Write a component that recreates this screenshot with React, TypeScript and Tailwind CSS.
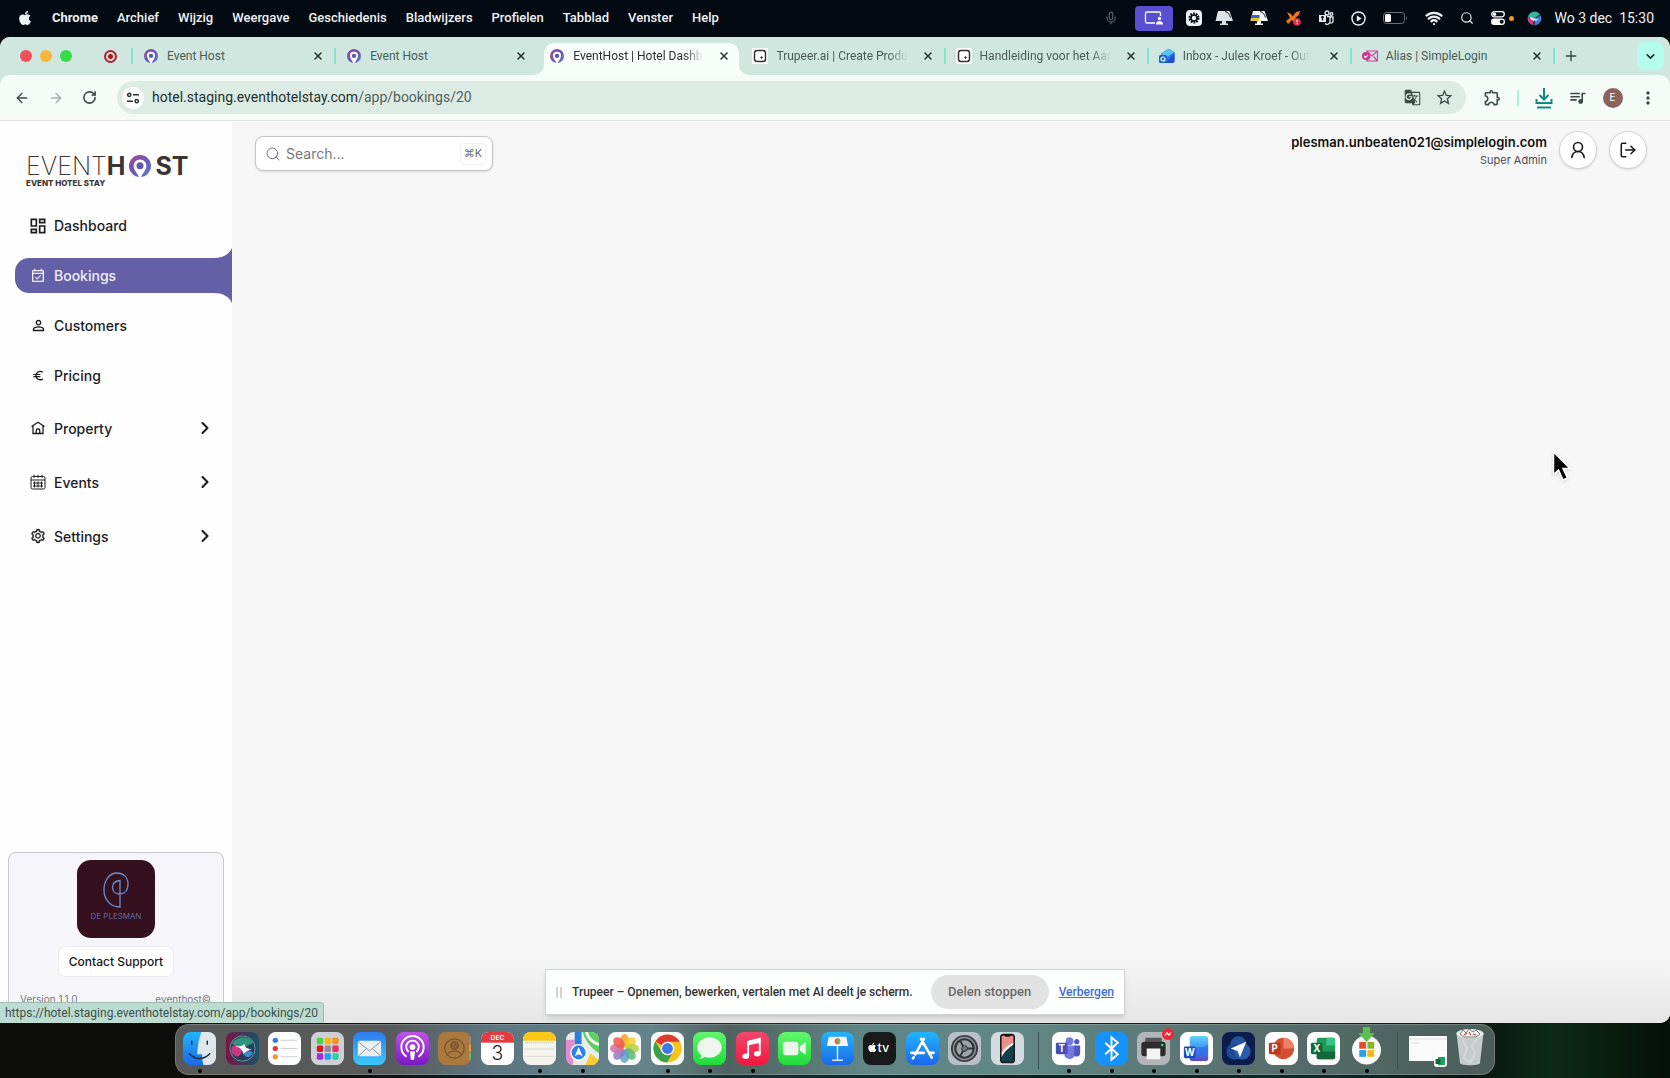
import { ReactNode } from 'react'
import { ArrowLeft, ArrowRight, ChevronDown, ChevronRight, LogOut, Mic, Plus, RotateCw, Search, Wifi, X } from 'lucide-react'
import { FaApple } from 'react-icons/fa'
import { AiOutlineSetting } from 'react-icons/ai'
import {
  MdEuro,
  MdGTranslate,
  MdMoreVert,
  MdOutlineDashboard,
  MdOutlineEventAvailable,
  MdOutlineExtension,
  MdPersonOutline,
  MdQueueMusic,
  MdStarOutline,
} from 'react-icons/md'

interface TabData {
  title: string
  icon: ReactNode
  active?: boolean
  divider?: boolean
  faded?: boolean
}

interface NavItem {
  label: string
  icon: ReactNode
}

interface DockItem {
  name: string
  art: ReactNode
  running?: boolean
}

function EventHostPin({ className }: { className?: string }) {
  return (
    <svg viewBox="0 0 22 22" className={className} aria-hidden="true">
      <defs>
        <linearGradient id="pin" x1="0" y1="0" x2="1" y2="1">
          <stop offset="0" stopColor="#a0469a" />
          <stop offset="0.55" stopColor="#6a5bb5" />
          <stop offset="1" stopColor="#5b7fd0" />
        </linearGradient>
      </defs>
      <circle cx="11" cy="11" r="11" fill="url(#pin)" />
      <path d="M10 22C9 19 4.600 15.500 4.600 10.800a6.400 6.400 0 0 1 12.800 0c0 4.700-4.400 8.200-5.400 11.200z" fill="#fff" />
      <circle cx="11" cy="10.800" r="3.500" fill="#5b5aa8" />
    </svg>
  )
}

function TrupeerIcon() {
  return (
    <svg viewBox="0 0 16 16" className="size-4" aria-hidden="true">
      <rect width="16" height="16" fill="#fff" />
      <rect x="2.500" y="2.500" width="11" height="11" rx="2.500" fill="none" stroke="#3a2c33" strokeWidth="1.500" />
      <path d="M9.500 7.500l.6 1.400 1.400.6-1.400.6-.6 1.400-.6-1.400-1.400-.6 1.400-.6z" fill="#3a2c33" />
    </svg>
  )
}

function OutlookIcon() {
  return (
    <svg viewBox="0 0 16 16" className="size-4" aria-hidden="true">
      <path d="M2 5.500L9.500.800 15.500 4v9a2 2 0 0 1-2 2H4z" fill="#2a78e4" />
      <path d="M2 5.500L9.500.800 15.500 4 8 9z" fill="#58c1f5" />
      <path d="M15.500 5v8a2 2 0 0 1-2 2H7z" fill="#1c4fd0" />
      <rect y="7" width="8" height="8" rx="1.500" fill="#1466c8" />
      <circle cx="4" cy="11" r="2" fill="none" stroke="#fff" strokeWidth="1.200" />
    </svg>
  )
}

function SimpleLoginIcon() {
  return (
    <svg viewBox="0 0 16 16" className="size-4" aria-hidden="true">
      <path d="M4 3h11.500v10H4M5 3.500l5 4.500 5-4.500M5 12.500l3.500-4M15 12.500l-3.500-4" fill="none" stroke="#d6409f" strokeWidth="1.200" />
      <circle cx="4" cy="8" r="4" fill="#d3308f" />
      <path d="M2.200 8l1.400 1.400 2.400-2.600" fill="none" stroke="#fff" strokeWidth="1.100" />
    </svg>
  )
}

const menus = ['Archief', 'Wijzig', 'Weergave', 'Geschiedenis', 'Bladwijzers', 'Profielen', 'Tabblad', 'Venster', 'Help']

const tabs: TabData[] = [
  { title: 'Event Host', icon: <EventHostPin className="size-[14px]" />, divider: true },
  { title: 'Event Host', icon: <EventHostPin className="size-[14px]" /> },
  { title: 'EventHost | Hotel Dashb', icon: <EventHostPin className="size-[14px]" />, active: true, faded: true },
  { title: 'Trupeer.ai | Create Produ', icon: <TrupeerIcon />, divider: true, faded: true },
  { title: 'Handleiding voor het Aar', icon: <TrupeerIcon />, divider: true, faded: true },
  { title: 'Inbox - Jules Kroef - Out', icon: <OutlookIcon />, divider: true, faded: true },
  { title: 'Alias | SimpleLogin', icon: <SimpleLoginIcon />, divider: true },
]

function SiriOrb({ className }: { className?: string }) {
  return (
    <svg viewBox="0 0 24 24" className={className} aria-hidden="true">
      <circle cx="12" cy="12" r="11" fill="#27304f" />
      <path d="M2 9a10.500 10.500 0 0 1 18-4l-8 7z" fill="#2fb79c" />
      <path d="M1.500 10A11 11 0 0 0 9 22l3-10z" fill="#d8356f" />
      <path d="M22 8a11 11 0 0 1-9 14.500L12 12z" fill="#3d7fd8" />
      <path d="M4 10c5-1 6 3 15 3-6 3-9 3-12 1z" fill="#fff" opacity="0.85" />
      <circle cx="12" cy="12" r="10.500" fill="none" stroke="#8ac" strokeOpacity="0.5" />
    </svg>
  )
}

function MenuBar() {
  return (
    <header className="flex h-[37px] shrink-0 items-center justify-between bg-[#030a12] pr-4 pl-[17px] pb-px font-['Roboto','Liberation_Sans',sans-serif] text-[13px] font-medium text-[#eef1f3]">
      <nav className="flex items-center gap-[19px]">
        <button aria-label="Apple">
          <FaApple className="size-4" />
        </button>
        <button className="font-bold">Chrome</button>
        {menus.map((menu) => (
          <button key={menu}>{menu}</button>
        ))}
      </nav>
      <div className="flex items-center gap-[17px]">
        <Mic className="size-[14px] text-[#5c6268]" />
        <div className="flex h-[25px] w-[38px] items-center justify-center rounded-[4px] bg-[#5a4ed0]">
          <svg viewBox="0 0 20 16" className="h-4 w-5" fill="none" stroke="#fff" strokeWidth="1.300">
            <path d="M11 13H3a1.500 1.500 0 0 1-1.500-1.500v-8A1.500 1.500 0 0 1 3 2h12a1.500 1.500 0 0 1 1.500 1.500V6" />
            <circle cx="15.500" cy="8.500" r="1.700" fill="#fff" stroke="none" />
            <path d="M12 14.500c0-2 1.500-3.500 3.500-3.500s3.500 1.500 3.500 3.500z" fill="#fff" stroke="none" />
          </svg>
        </div>
        <svg viewBox="0 0 16 16" className="-mx-1 size-4">
          <rect width="16" height="16" rx="4" fill="#eef1f3" />
          <circle cx="8" cy="8" r="4" fill="none" stroke="#0b1117" strokeWidth="3" strokeDasharray="1.600 0.900" />
          <circle cx="8" cy="8" r="3" fill="none" stroke="#0b1117" strokeWidth="1.500" />
        </svg>
        <svg viewBox="0 0 18 16" className="h-4 w-[18px]">
          <path d="M3 1h11.500L18 11H.500z" fill="#dfe3e6" />
          <path d="M10 1.500c3 .5 4.500 3 5.500 6" fill="none" stroke="#0b1117" />
          <path d="M7 11h4v2.500h2V15H5v-1.500h2z" fill="#dfe3e6" />
        </svg>
        <svg viewBox="0 0 18 16" className="h-4 w-[18px]">
          <path d="M3 1h11.500L18 11H.500z" fill="#f3f4f6" />
          <path d="M1.500 5h8v3H1z" fill="#3a62c9" />
          <path d="M1 8h8.500v3H.500z" fill="#e6c72f" />
          <path d="M10 1.500c3 .5 4.500 3 5.500 6" fill="none" stroke="#0b1117" />
          <path d="M7 11h4v2.500h2V15H5v-1.500h2z" fill="#f3f4f6" />
        </svg>
        <svg viewBox="0 0 16 16" className="size-4">
          <path d="M2 2l4 2 1.500 2.500L11 2l4-1-1 4-3.500 2.500L12 12l-2 2-3-4-4 4-2-3 4-3z" fill="#f0761e" />
          <circle cx="12" cy="12" r="3.800" fill="#e02d4b" />
          <path d="M12 9.800v2.600M12 13.200v1" stroke="#fff" />
        </svg>
        <svg viewBox="0 0 16 16" className="size-4" fill="none" stroke="#e8ebed" strokeWidth="1.300">
          <rect x="1" y="5" width="7" height="7" fill="#e8ebed" stroke="none" />
          <path d="M3 7h3M4.500 7v3.500" stroke="#030a12" />
          <circle cx="9" cy="3" r="2" />
          <circle cx="13.500" cy="4" r="1.300" />
          <path d="M9 6.500h3v5a3 3 0 0 1-5 2M12 7h3v4a2 2 0 0 1-3 1.800" />
        </svg>
        <svg viewBox="0 0 16 16" className="size-[15px]" fill="none" stroke="#eef1f3" strokeWidth="1.500">
          <circle cx="8" cy="8" r="7" />
          <path d="M6.200 4.800v6.400L11.300 8z" fill="#eef1f3" stroke="none" />
        </svg>
        <svg viewBox="0 0 25 12" className="h-3 w-[25px]">
          <rect x="0.500" y="0.500" width="21" height="11" rx="3" fill="none" stroke="#6c7378" />
          <rect x="2" y="2" width="6" height="8" rx="1.500" fill="#fff" />
          <path d="M23 4v4c1.300-.5 1.300-3.500 0-4z" fill="#6c7378" />
        </svg>
        <Wifi className="size-[18px]" strokeWidth={3} />
        <Search className="size-[14px]" />
        <div className="flex items-center gap-1">
          <svg viewBox="0 0 14 14" className="size-[14px]">
            <rect x="0.700" y="0.700" width="12.600" height="5.200" rx="2.600" fill="none" stroke="#fff" strokeWidth="1.300" />
            <circle cx="3.500" cy="3.300" r="1.700" fill="#fff" />
            <rect y="7.500" width="14" height="6.500" rx="3.200" fill="#fff" />
            <circle cx="10.700" cy="10.700" r="2" fill="#030a12" />
          </svg>
          <span className="size-[5px] rounded-full bg-[#f09a2c]" />
        </div>
        <SiriOrb className="-mx-1 size-[15px]" />
        <span className="text-[14px] font-normal whitespace-pre">Wo 3 dec  15:30</span>
      </div>
    </header>
  )
}

function Tab({ tab }: { tab: TabData }) {
  return (
    <div className="relative flex h-full min-w-0 flex-1 items-center">
      {tab.active && (
        <div className="absolute top-[6px] right-[3px] bottom-0 left-[5px] rounded-t-[10px] bg-[#f7fdf9]">
          <svg viewBox="0 0 10 10" className="absolute bottom-0 -left-[10px] size-[10px]">
            <path d="M10 0v10H0A10 10 0 0 0 10 0z" fill="#f7fdf9" />
          </svg>
          <svg viewBox="0 0 10 10" className="absolute -right-[10px] bottom-0 size-[10px]">
            <path d="M0 0v10h10A10 10 0 0 1 0 0z" fill="#f7fdf9" />
          </svg>
        </div>
      )}
      <div className="relative flex min-w-0 flex-1 items-center pr-[10px] pl-[10px]">
        <span className="flex w-4 shrink-0 justify-center">{tab.icon}</span>
        <button
          className={`ml-2 font-['Roboto','Liberation_Sans',sans-serif] text-[12px] whitespace-nowrap ${
            tab.active ? 'text-[#27312e]' : 'text-[#4a5b56]'
          } ${tab.faded ? '[mask-image:linear-gradient(to_right,black_85%,transparent)]' : ''}`}
        >
          {tab.title}
        </button>
        <button aria-label="Sluit tabblad" className="ml-auto shrink-0 text-[#27312e]">
          <X className="size-3" strokeWidth={3} />
        </button>
      </div>
      <span className={`h-4 w-[2px] ${tab.divider ? 'bg-[#7fe8ca]' : ''}`} />
    </div>
  )
}

function BrowserChrome() {
  return (
    <div className="shrink-0 bg-[#cfe7df]">
      <div className="flex h-[38px] items-center">
        <div className="flex w-[133px] shrink-0 items-center pl-5">
          <div className="flex gap-2">
            <span className="size-3 rounded-full bg-[#f2505a]" />
            <span className="size-3 rounded-full bg-[#f6b73c]" />
            <span className="size-3 rounded-full bg-[#35dd49]" />
          </div>
          <span className="ml-8 flex size-[13px] items-center justify-center rounded-full border-2 border-[#b3202e]">
            <span className="size-[7px] rounded-full border border-[#cfe7df] bg-[#b3101e]" />
          </span>
          <span className="ml-auto h-4 w-[2px] bg-[#7fe8ca]" />
        </div>
        <div className="flex h-full max-w-[1422px] flex-1">
          {tabs.map((tab, i) => (
            <Tab key={i} tab={tab} />
          ))}
        </div>
        <button aria-label="Nieuw tabblad" className="ml-2 text-[#33453f]">
          <Plus className="size-4" />
        </button>
        <button aria-label="Zoek tabbladen" className="mr-[6px] ml-auto flex h-7 w-[27px] items-center justify-center rounded-lg bg-[#b4fdea] text-[#123a30]">
          <ChevronDown className="size-[13px]" strokeWidth={3} />
        </button>
      </div>
      <div className="flex h-[46px] items-center rounded-t-[10px] border-b border-[#dfe5e2] bg-[#f5fcf8] pr-3 pl-[14px] text-[#3a4a45]">
        <div className="flex w-[103px] shrink-0 items-center gap-[18px]">
          <button aria-label="Terug">
            <ArrowLeft className="size-4" />
          </button>
          <button aria-label="Vooruit" className="text-[#a5b0ac]">
            <ArrowRight className="size-4" />
          </button>
          <button aria-label="Vernieuw">
            <RotateCw className="size-[15px]" strokeWidth={2.5} />
          </button>
        </div>
        <div className="flex h-[33px] flex-1 items-center rounded-full bg-[#dcece5] pr-3 pl-[5px]">
          <span className="flex size-[22px] shrink-0 items-center justify-center rounded-full bg-white">
            <svg viewBox="0 0 12 12" className="size-3" fill="none" stroke="#26322e" strokeWidth="1.500">
              <circle cx="2.300" cy="2.800" r="1.600" />
              <path d="M6 2.800h6M0 9.200h6" />
              <circle cx="9.700" cy="9.200" r="1.600" />
            </svg>
          </span>
          <a href="#" className="ml-2 flex-1 font-['Roboto','Liberation_Sans',sans-serif] text-[14px] text-[#24302c]">
            hotel.staging.eventhotelstay.com<span className="text-[#52615c]">/app/bookings/20</span>
          </a>
          <button aria-label="Vertaal" className="mr-[14px]">
            <MdGTranslate className="size-[17px]" />
          </button>
          <button aria-label="Bladwijzer">
            <MdStarOutline className="size-[19px]" />
          </button>
        </div>
        <div className="flex w-[192px] shrink-0 items-center justify-between pl-[17px]">
          <button aria-label="Extensies">
            <MdOutlineExtension className="size-[19px]" />
          </button>
          <span className="h-4 w-[2px] bg-[#a5f5df]" />
          <button aria-label="Downloads">
            <svg viewBox="0 0 18 22" className="h-[22px] w-[18px]" fill="none" stroke="#12897a" strokeWidth="2">
              <path d="M9 1v11M4.500 8L9 12.500 13.500 8M1.500 12v4h15v-4M2 20.500h14" />
            </svg>
          </button>
          <button aria-label="Media">
            <MdQueueMusic className="size-[19px]" />
          </button>
          <button className="flex size-5 items-center justify-center rounded-full bg-[#8a635c] text-[10px] text-white">E</button>
          <button aria-label="Menu">
            <MdMoreVert className="size-5" />
          </button>
        </div>
      </div>
    </div>
  )
}

const navItems: NavItem[] = [
  { label: 'Dashboard', icon: <MdOutlineDashboard className="size-5 shrink-0" /> },
  { label: 'Bookings', icon: <MdOutlineEventAvailable className="size-4 shrink-0" /> },
  { label: 'Customers', icon: <MdPersonOutline className="size-[17px] shrink-0" /> },
  { label: 'Pricing', icon: <MdEuro className="size-[13px] shrink-0" /> },
]

const navGroups: NavItem[] = [
  {
    label: 'Property',
    icon: (
      <svg viewBox="0 0 14 14" className="size-[14px]" fill="none" stroke="currentColor" strokeWidth="1.300">
        <path d="M.500 5.500L7 1.200l6.500 4.300M2 5v7.500h10V5M5.200 12.500V9.800a1.800 1.800 0 0 1 3.600 0v2.700" />
      </svg>
    ),
  },
  {
    label: 'Events',
    icon: (
      <svg viewBox="0 0 16 16" className="size-4" fill="none" stroke="currentColor">
        <rect x="1" y="2.500" width="14" height="12.500" rx="1.500" />
        <path d="M1 6h14M4 .800v3M8 .800v3M12 .800v3M3 9h10M3 12h10M4.500 7.500v6M8 7.500v6M11.500 7.500v6" />
      </svg>
    ),
  },
  { label: 'Settings', icon: <AiOutlineSetting className="size-4" strokeWidth={20} /> },
]

function Sidebar() {
  return (
    <aside className="flex w-[232px] shrink-0 flex-col bg-[#fefefe] text-[14px] font-medium text-[#1c1c1f]">
      <div className="pt-[32px] pl-[26px]">
        <div className="flex h-[26px] items-center text-[25px] leading-6 text-[#3b3532]">
          <span className="font-[200]">EVENT</span>
          <span className="font-bold">H</span>
          <EventHostPin className="mx-1 size-[22px]" />
          <span className="font-bold">ST</span>
        </div>
        <div className="text-[8px] leading-[8px] font-extrabold text-[#3b3532]">EVENT HOTEL STAY</div>
      </div>
      <nav className="mt-[21px] flex flex-col">
        <ul className="flex flex-col gap-[15px]">
          {navItems.map((item) => {
            const current = item.label === 'Bookings'
            return (
              <li key={item.label} className="relative pl-[15px]">
                <a
                  href="#"
                  className={`flex h-[35px] items-center gap-2 pl-[15px] ${
                    current ? 'rounded-l-[14px] bg-[#6360a8] text-[#f1f0fa]' : ''
                  }`}
                >
                  <span className="flex w-4 justify-center">{item.icon}</span>
                  {item.label}
                </a>
                {current && (
                  <>
                    <svg viewBox="0 0 18 11" className="absolute -top-[10px] right-0 h-[11px] w-[18px]">
                      <path d="M18 0v11H0v-1C8 10 15 7 18 0z" fill="#6360a8" />
                    </svg>
                    <svg viewBox="0 0 18 11" className="absolute right-0 -bottom-[10px] h-[11px] w-[18px]">
                      <path d="M18 11V0H0v1c8 0 15 3 18 10z" fill="#6360a8" />
                    </svg>
                  </>
                )}
              </li>
            )
          })}
        </ul>
        <ul className="mt-[15px] flex flex-col gap-[14px]">
          {navGroups.map((item) => (
            <li key={item.label}>
              <button className="flex h-10 w-full items-center gap-2 pr-[17px] pl-[30px]">
                <span className="flex w-4 justify-center">{item.icon}</span>
                {item.label}
                <ChevronRight className="ml-auto size-5" strokeWidth={2.5} />
              </button>
            </li>
          ))}
        </ul>
      </nav>
      <section className="mx-2 mt-auto flex h-[171px] flex-col items-center rounded-t-lg border border-b-0 border-[#c9c9cf] bg-[#f6f6fa] pt-[7px]">
        <div className="flex size-[78px] flex-col items-center rounded-[14px] bg-[#351120] pt-3">
          <svg viewBox="0 0 28 36" className="h-9 w-7" fill="none" stroke="#6b8bd0" strokeWidth="1.300">
            <path d="M18 35C8 35 2 27 2 18S7 1 15 1c6 0 11 4 11 11s-4 10-8.500 10-7-3-7-6.500S13 9 18 8.500V35z" />
          </svg>
          <span className="mt-[2px] text-[8px] font-light text-[#6b7fc4]">DE PLESMAN</span>
        </div>
        <button className="mt-2 h-[31px] w-[116px] rounded-lg border border-[#ececf0] bg-white text-[12px] text-[#17171a]">Contact Support</button>
        <div className="mt-[15px] flex w-full justify-between pr-3 pl-[11px] text-[10px] font-normal text-[#77777d]">
          <span>Version 1.1.0</span>
          <span>eventhost©</span>
        </div>
      </section>
    </aside>
  )
}

function Content() {
  return (
    <main className="flex flex-1 items-start justify-between bg-[linear-gradient(to_bottom,#f7f7f8_0,#f7f7f7_92%,#e6e6e6)] pr-[23px] pl-[23px]">
      <label className="mt-[15px] flex h-[35px] w-[238px] items-center gap-[5px] rounded-lg border border-[#c6c6c9] bg-white pr-[6px] pl-[9px] shadow-sm">
        <Search className="size-4 shrink-0 text-[#707075]" strokeWidth={1.5} />
        <input aria-label="Search" placeholder="Search..." className="min-w-0 flex-1 text-[14px] outline-none placeholder:text-[#77777b]" />
        <kbd className="flex h-[22px] w-[26px] shrink-0 items-center justify-center rounded border border-[#f1f1f2] font-['Inter','DejaVu_Sans',sans-serif] text-[11px] text-[#6d6d72]">
          ⌘K
        </kbd>
      </label>
      <div className="flex items-center gap-3 pt-[10px]">
        <div className="text-right">
          <div className="text-[13px] leading-5 font-semibold text-[#111]">plesman.unbeaten021@simplelogin.com</div>
          <div className="text-[11px] leading-4 text-[#4b4b50]">Super Admin</div>
        </div>
        <button aria-label="Profiel" className="flex size-[38px] items-center justify-center rounded-full border border-[#d2d2d5] bg-white shadow-sm">
          <svg viewBox="0 0 18 20" className="h-5 w-[18px]" fill="none" stroke="#18181b" strokeWidth="1.600" strokeLinecap="round">
            <circle cx="9" cy="7" r="4.500" />
            <path d="M2.800 17.500c.6-3.800 3-6 6.200-6s5.600 2.200 6.200 6" />
          </svg>
        </button>
        <button aria-label="Uitloggen" className="flex size-[38px] items-center justify-center rounded-full border border-[#d2d2d5] bg-white shadow-sm">
          <LogOut className="size-[18px] text-[#18181b]" />
        </button>
      </div>
    </main>
  )
}

function Tile({ fill, children }: { fill: string; children?: ReactNode }) {
  return (
    <svg viewBox="0 0 34 34" className="size-[33px]" aria-hidden="true">
      <defs>
        <clipPath id="tile">
          <rect width="34" height="34" rx="8" />
        </clipPath>
        <linearGradient id="sky" x2="0" y2="1"><stop stopColor="#2b7cf0" /><stop offset="1" stopColor="#3cc8fb" /></linearGradient>
        <linearGradient id="azure" x2="0" y2="1"><stop stopColor="#22b5fb" /><stop offset="1" stopColor="#1b68ea" /></linearGradient>
        <linearGradient id="lime" x2="0" y2="1"><stop stopColor="#62f76c" /><stop offset="1" stopColor="#1edb3b" /></linearGradient>
        <linearGradient id="violet" x2="0" y2="1"><stop stopColor="#c052ea" /><stop offset="1" stopColor="#7a18c4" /></linearGradient>
        <linearGradient id="rose" x2="0" y2="1"><stop stopColor="#f3476d" /><stop offset="1" stopColor="#f3173f" /></linearGradient>
        <linearGradient id="wine" x2="1" y2="0"><stop stopColor="#7c1245" /><stop offset="1" stopColor="#17546a" /></linearGradient>
        <linearGradient id="wordblue" x2="0" y2="1"><stop stopColor="#64d5fa" /><stop offset="0.5" stopColor="#3f8ff5" /><stop offset="1" stopColor="#5b46c9" /></linearGradient>
      </defs>
      <g clipPath="url(#tile)">
        <rect width="34" height="34" fill={fill} />
        {children}
      </g>
    </svg>
  )
}

function OfficeLetter({ letter, fill }: { letter: string; fill: string }) {
  return (
    <>
      <rect x="4" y="11" width="12" height="12" rx="1.500" fill={fill} />
      <text x="10" y="20.500" fontSize="10" fontWeight="700" textAnchor="middle" fill="#fff">{letter}</text>
    </>
  )
}

const petals = ['#f6a02c', '#f5d02c', '#b4d23e', '#5cb868', '#5aa5c9', '#8d7cc9', '#cf70a8', '#ee5a4b']
const launchpad = ['#4ad24e', '#f7b516', '#f5921e', '#e0151f', '#8a9096', '#f02b69', '#a32bd9', '#2b9df0', '#2fd0a0']

const apps: DockItem[] = [
  {
    name: 'Finder',
    running: true,
    art: (
      <Tile fill="url(#azure)">
        <path d="M19 0h15v34H21c-1-4-1.300-8-1.300-11H14.500C15 14 16.500 6 19 0z" fill="#dfe6ee" />
        <path d="M9 9.500v3M25 9.500v3M6.500 22.500c6 6.500 15 6.500 21 0" fill="none" stroke="#1d2b3d" strokeWidth="1.500" strokeLinecap="round" />
      </Tile>
    ),
  },
  {
    name: 'Siri',
    art: (
      <Tile fill="url(#wine)">
        <circle cx="17" cy="17" r="13" fill="#263c58" opacity="0.800" />
        <path d="M6 12c5-8 17-9 22-1L17 17z" fill="#35a984" opacity="0.800" />
        <path d="M6 22c-2-7 1-11 11-6-1 9-5 12-11 6z" fill="#d83a85" opacity="0.900" />
        <path d="M28 21c-4 7-10 7-11-4z" fill="#3f93dd" opacity="0.900" />
        <path d="M8 14c5 1 8 1 11-2 0 4 3 5 8 6-5 1-7 2-9 5-1-5-4-7-10-9z" fill="#f4f6ff" />
        <circle cx="17" cy="17" r="13" fill="none" stroke="#67b9ae" strokeOpacity="0.800" />
      </Tile>
    ),
  },
  {
    name: 'Herinneringen',
    art: (
      <Tile fill="#fdfdfd">
        <circle cx="7.500" cy="8.500" r="2.700" fill="#3478e6" />
        <circle cx="7.500" cy="17" r="2.700" fill="#dc3b3b" />
        <circle cx="7.500" cy="25.500" r="2.700" fill="#ec9736" />
        <path d="M13 8.500h17M13 17h17M13 25.500h17" stroke="#cfcfd2" />
      </Tile>
    ),
  },
  {
    name: 'Launchpad',
    art: (
      <Tile fill="#cdd0d4">
        {launchpad.map((color, i) => (
          <rect key={color} x={6 + (i % 3) * 8} y={6 + Math.floor(i / 3) * 8} width="6.500" height="6.500" rx="1.500" fill={color} />
        ))}
      </Tile>
    ),
  },
  {
    name: 'Mail',
    running: true,
    art: (
      <Tile fill="url(#sky)">
        <rect x="5" y="9" width="24" height="16" rx="2" fill="#eceff3" />
        <path d="M5.500 10l11.500 9.500L28.500 10M6 24.500l8-7.500M28 24.500L20 17" fill="none" stroke="#8c939b" />
      </Tile>
    ),
  },
  {
    name: 'Podcasts',
    art: (
      <Tile fill="url(#violet)">
        <g fill="none" stroke="#fff" strokeWidth="2">
          <path d="M11 25.500a11.500 11.500 0 1 1 12 0" />
          <path d="M13 20.500a6.500 6.500 0 1 1 8 0" />
        </g>
        <circle cx="17" cy="15.500" r="3" fill="#fff" />
        <path d="M14.500 20h5l-.8 8.500h-3.400z" fill="#fff" />
      </Tile>
    ),
  },
  {
    name: 'Contacten',
    art: (
      <Tile fill="#a9793f">
        <path d="M32 4h2v7h-2z" fill="#8a8f94" />
        <path d="M32 13h2v7h-2z" fill="#ef9a32" />
        <path d="M32 22h2v7h-2z" fill="#56c466" />
        <g fill="none" stroke="#7b5428" strokeWidth="1.300">
          <circle cx="17" cy="17" r="10" />
          <circle cx="17" cy="14" r="4" fill="#8b6130" />
          <path d="M9.500 23.500c3-5 12-5 15 0" />
        </g>
      </Tile>
    ),
  },
  {
    name: 'Agenda',
    art: (
      <Tile fill="#fff">
        <rect width="34" height="11" fill="#e23b41" />
        <text x="17" y="8.500" fontSize="7" fontWeight="600" textAnchor="middle" fill="#fff">DEC</text>
        <text x="17" y="28.500" fontSize="20" fontWeight="300" textAnchor="middle" fill="#222">3</text>
      </Tile>
    ),
  },
  {
    name: 'Notities',
    running: true,
    art: (
      <Tile fill="#f4f3ee">
        <rect width="34" height="9" fill="#fbc614" />
        <path d="M2 11h30" stroke="#b9b39f" strokeDasharray="1 1" />
        <path d="M2 17.500h30M2 25h30" stroke="#d7d5cc" />
      </Tile>
    ),
  },
  {
    name: 'Kaarten',
    running: true,
    art: (
      <Tile fill="#e9eceb">
        <path d="M17 0h17v22C26 17 20 9 17 0z" fill="#5fcf62" />
        <path d="M21 0c2 7 7 11 13 13" fill="none" stroke="#f3f5f3" strokeWidth="3" />
        <path d="M0 8h9l-2 26H0z" fill="#e58bcb" />
        <path d="M20 34l5-12 9 7v5z" fill="#f8cd38" />
        <path d="M9 0h7v16H9z" fill="#2d7de0" />
        <circle cx="13" cy="21" r="8" fill="#2b82ee" stroke="#fff" strokeWidth="1.500" />
        <path d="M13 15.500l4 9.500-4-2-4 2z" fill="#fff" />
      </Tile>
    ),
  },
  {
    name: "Foto's",
    art: (
      <Tile fill="#fcfcfc">
        {petals.map((color, i) => (
          <ellipse key={color} cx="17" cy="9" rx="4.800" ry="7" fill={color} opacity="0.850" transform={`rotate(${i * 45} 17 17)`} />
        ))}
      </Tile>
    ),
  },
  {
    name: 'Chrome',
    running: true,
    art: (
      <Tile fill="#fbfbfb">
        <circle cx="17" cy="17" r="14.500" fill="#f9c51d" />
        <path d="M17 17L4.500 9.700A14.500 14.500 0 0 1 29.600 10H17z" fill="#dd3b32" />
        <path d="M4.500 9.700A14.500 14.500 0 0 0 16.500 31.500l6.500-11L17 17l-6 3.500z" fill="#3a9f4f" />
        <circle cx="17" cy="17" r="7" fill="#fff" />
        <circle cx="17" cy="17" r="5.600" fill="#3c77e8" />
      </Tile>
    ),
  },
  {
    name: 'Berichten',
    running: true,
    art: (
      <Tile fill="url(#lime)">
        <ellipse cx="17" cy="16" rx="12.500" ry="10.500" fill="#eef7ee" />
        <path d="M9 22c0 3-1 4.500-2.500 5.500 3.500 0 6-1.500 7-3.500z" fill="#eef7ee" />
      </Tile>
    ),
  },
  {
    name: 'Muziek',
    running: true,
    art: (
      <Tile fill="url(#rose)">
        <path d="M12.500 25V10l12-3v15" fill="none" stroke="#fff" strokeWidth="2" />
        <path d="M12 9.500L25 6.500v4.500l-13 3z" fill="#fff" />
        <ellipse cx="10" cy="25" rx="3.500" ry="2.800" fill="#fff" />
        <ellipse cx="22" cy="22.500" rx="3.500" ry="2.800" fill="#fff" />
      </Tile>
    ),
  },
  {
    name: 'FaceTime',
    art: (
      <Tile fill="url(#lime)">
        <rect x="5" y="10" width="16" height="14" rx="3.500" fill="#eaf6ea" />
        <path d="M22.500 15l6-4.500v13L22.500 19z" fill="#eaf6ea" />
      </Tile>
    ),
  },
  {
    name: 'Keynote',
    art: (
      <Tile fill="url(#azure)">
        <path d="M8 5h18l2 9.500H6z" fill="#f4f6f8" />
        <circle cx="17" cy="9.500" r="3" fill="#e3684a" />
        <path d="M17 9.500V6.500a3 3 0 0 1 1.500 5.500z" fill="#6abf58" />
        <path d="M17 14.500V28M11.500 29h11" stroke="#e4edf7" strokeWidth="1.500" />
      </Tile>
    ),
  },
  {
    name: 'TV',
    art: (
      <Tile fill="#17191b">
        <FaApple x="4" y="10.500" size={11} color="#fff" />
        <text x="15" y="21" fontSize="13" fontWeight="500" fill="#fff">tv</text>
      </Tile>
    ),
  },
  {
    name: 'App Store',
    art: (
      <Tile fill="url(#azure)">
        <path d="M18.500 7L9.500 23M8 26l-.8 1.200M15.500 7l11 19.500M5.500 21.500h13M24 21.500h4.500" fill="none" stroke="#fff" strokeWidth="2.600" strokeLinecap="round" />
      </Tile>
    ),
  },
  {
    name: 'Instellingen',
    art: (
      <Tile fill="#b9bfc6">
        <circle cx="17" cy="17" r="13" fill="#8b9097" stroke="#3b4046" strokeWidth="2" />
        <circle cx="17" cy="17" r="9.500" fill="#9da2a8" stroke="#30353a" strokeWidth="2.200" />
        <path d="M17 17h9M17 17l-4.500-8M17 17l-4.500 8" stroke="#30353a" strokeWidth="2" />
        <circle cx="17" cy="17" r="3" fill="#70757b" stroke="#30353a" />
      </Tile>
    ),
  },
  {
    name: 'iPhone-synchronisatie',
    art: (
      <Tile fill="#d4dbe0">
        <rect x="10" y="2.500" width="14" height="29" rx="3" fill="#133e4c" stroke="#14191d" strokeWidth="1.500" />
        <path d="M11 4h12v7c-3 3-8 5-12 12z" fill="#ed9089" />
        <path d="M23 13c-5 4-9 7-12 13v-5c4-6 8-8 12-10z" fill="#eef5f2" />
        <rect x="14.500" y="3" width="5" height="2" rx="1" fill="#14191d" />
      </Tile>
    ),
  },
]

const runningApps: DockItem[] = [
  {
    name: 'Teams',
    running: true,
    art: (
      <Tile fill="#fff">
        <circle cx="18" cy="9.500" r="4" fill="#7479dd" />
        <circle cx="25.500" cy="10" r="2.700" fill="#5158c4" />
        <path d="M13 14h11v9a6 6 0 0 1-11 2z" fill="#7479dd" />
        <path d="M23 14h6v7c0 4-3 5-6 4z" fill="#5158c4" />
        <OfficeLetter letter="T" fill="#474eb4" />
      </Tile>
    ),
  },
  {
    name: 'Bluetooth',
    running: true,
    art: (
      <Tile fill="#1593fb">
        <path d="M10.500 11l13 12L17 28.500v-23L23.500 11l-13 12" fill="none" stroke="#fff" strokeWidth="2" />
      </Tile>
    ),
  },
  {
    name: 'Printer',
    running: true,
    art: (
      <Tile fill="#b4b5b8">
        <rect x="8.500" y="6" width="17" height="6" rx="1" fill="#55585c" />
        <rect x="4.500" y="10" width="25" height="15" rx="3" fill="#2a2c2f" />
        <path d="M10 17h14v11H10z" fill="#f4f4f4" />
        <circle cx="26" cy="13.500" r="1.300" fill="#3fe061" />
      </Tile>
    ),
  },
  {
    name: 'Word',
    running: true,
    art: (
      <Tile fill="#fff">
        <rect x="10" y="4" width="19" height="26" rx="3" fill="url(#wordblue)" />
        <path d="M10 18c7-6 13 1 19-5v8c-6 6-12 0-19 5z" fill="#2d6ee8" opacity="0.700" />
        <g transform="translate(0 4)">
          <OfficeLetter letter="W" fill="#1d4db0" />
        </g>
      </Tile>
    ),
  },
  {
    name: 'Copilot',
    running: true,
    art: (
      <Tile fill="#0b1c4d">
        <circle cx="17" cy="13" r="8.500" fill="#23539f" />
        <circle cx="13" cy="20" r="8.500" fill="#1f4b96" />
        <circle cx="21" cy="20" r="8.500" fill="#2a5cab" />
        <path d="M25 10l-6.500 16-2.500-6.500L9 17z" fill="#fff" />
      </Tile>
    ),
  },
  {
    name: 'PowerPoint',
    running: true,
    art: (
      <Tile fill="#fff">
        <circle cx="19" cy="17" r="11" fill="#d2502f" />
        <path d="M19 6a11 11 0 0 1 11 11H19z" fill="#ee8064" />
        <OfficeLetter letter="P" fill="#b93a1f" />
      </Tile>
    ),
  },
  {
    name: 'Excel',
    running: true,
    art: (
      <Tile fill="#fff">
        <rect x="10" y="6" width="19" height="22" rx="2" fill="#1e9a58" />
        <path d="M20 6h7a2 2 0 0 1 2 2v6h-9z" fill="#35c481" />
        <path d="M10 20h19v6a2 2 0 0 1-2 2H12a2 2 0 0 1-2-2z" fill="#17673d" />
        <OfficeLetter letter="X" fill="#116a3c" />
      </Tile>
    ),
  },
  {
    name: 'Installatie',
    running: true,
    art: (
      <svg viewBox="0 0 34 42" className="h-[38px] w-[31px] shrink-0" aria-hidden="true">
        <ellipse cx="17" cy="25.500" rx="16" ry="16" fill="#fafcfc" />
        <path d="M9 16.500h7.500V24H9z" fill="#e84e2c" />
        <path d="M18 16.500h7.500V24H18z" fill="#80b928" />
        <path d="M9 25.500h7.500V33H9z" fill="#2aa3e6" />
        <path d="M18 25.500h7.500V33H18z" fill="#f9b71c" />
        <path d="M13 0h8v7h5l-9 9.500L8 7h5z" fill="#5dc152" />
      </svg>
    ),
  },
]

function DockIcon({ item }: { item: DockItem }) {
  return (
    <button aria-label={item.name} className="relative flex h-[33px] w-[33px] items-end justify-center">
      {item.art}
      {item.name === 'Printer' && (
        <span className="absolute -top-1 -right-1 flex size-3 items-center justify-center rounded-full bg-[#e8283a]">
          <svg viewBox="0 0 8 8" className="size-2">
            <path d="M1 5.500L3 3l2 2 2-2.500" fill="none" stroke="#fff" strokeWidth="1.200" />
          </svg>
        </span>
      )}
      {item.running && <span className="absolute top-[37px] left-[15px] size-1 rounded-full bg-black" />}
    </button>
  )
}

function Dock() {
  return (
    <footer className="flex h-[55px] shrink-0 items-start justify-center pt-px">
      <div className="flex h-[51px] w-[1320px] rounded-[14px] border border-white/20 bg-[linear-gradient(to_right,#585a5a_0,#585a5a_16%,#5c7682_24%,#648489_36%,#50625f_42%,#5f8585_52%,#618784_64%,#587270_80%,#4a5d58)] pt-[7px] pr-[9px] pl-[7px]">
        <div className="flex w-[841px] items-start justify-between">
          {apps.map((item) => (
            <DockIcon key={item.name} item={item} />
          ))}
        </div>
        <span className="ml-[14px] h-[37px] w-px bg-[#38504f]" />
        <div className="ml-[13px] flex w-[331px] items-start justify-between">
          {runningApps.map((item) => (
            <DockIcon key={item.name} item={item} />
          ))}
        </div>
        <span className="ml-[14px] h-[37px] w-px bg-[#38504f]" />
        <button aria-label="Geminimaliseerd venster" className="mt-[4px] ml-[11px] h-[32px] w-[39px]">
          <svg viewBox="0 0 39 32" className="h-8 w-[39px]" aria-hidden="true">
            <rect width="38" height="25" fill="#fafafa" />
            <path d="M0 3h38M2 7h8" stroke="#d9dcdc" />
            <rect x="25" y="19" width="13" height="12" rx="3" fill="#fff" />
            <rect x="29" y="21" width="7" height="8" fill="#21a15f" />
            <rect x="26.500" y="23" width="5" height="5" fill="#116a3c" />
          </svg>
        </button>
        <button aria-label="Prullenmand" className="-mt-1 ml-auto h-[38px] w-[30px]">
          <svg viewBox="0 0 30 38" className="h-[38px] w-[30px]" aria-hidden="true">
            <path d="M1.500 5h27L25 35c-.3 3-19.700 3-20 0z" fill="#c6cccb" />
            <path d="M8 12l4 8-3 10 6 5 5-9-3-9 5-6" fill="none" stroke="#d3d9d8" strokeWidth="2" />
            <ellipse cx="15" cy="5.500" rx="13.500" ry="4.500" fill="#e9eceb" />
            <path d="M5 6l3-4 3 3 3-4 4 3 3-2 4 4-4 3H9z" fill="#f5f5f5" stroke="#59636a" strokeWidth="0.800" />
            <path d="M9 7l3-2M18 6l3 1M14 4l2 3" stroke="#c2413c" strokeWidth="1.200" />
          </svg>
        </button>
      </div>
    </footer>
  )
}

function ShareBanner() {
  return (
    <div className="absolute bottom-2 left-1/2 flex h-[46px] w-[580px] -translate-x-1/2 items-center border border-[#d3d3d3] bg-[#fdfefe] px-[10px] font-['Roboto','Liberation_Sans',sans-serif] shadow-md">
      <span className="h-[11px] w-[6px] shrink-0 border-x-2 border-[#d3d3d3]" />
      <span className="ml-[10px] text-[12px] font-medium whitespace-nowrap text-[#333]">
        Trupeer – Opnemen, bewerken, vertalen met AI deelt je scherm.
      </span>
      <button className="ml-auto h-[34px] w-[118px] shrink-0 rounded-full bg-[#e2e2e2] text-[13px] font-medium text-[#6a6a6a]">Delen stoppen</button>
      <a href="#" className="ml-[10px] text-[12px] font-medium text-[#3e6fe0] underline">
        Verbergen
      </a>
    </div>
  )
}

export default function App() {
  return (
    <div className="flex h-screen flex-col overflow-hidden bg-[linear-gradient(to_right,#0d0d0c_0,#0d0d0c_20%,#12333b_40%,#0d1e20_60%,#0a2a26_80%,#07150f_88%,#0d2a18_93%,#041009)] font-['Inter','Liberation_Sans',sans-serif]">
      <MenuBar />
      <div className="relative flex min-h-0 flex-1 flex-col overflow-hidden rounded-t-[10px] rounded-br-[10px] bg-white">
        <BrowserChrome />
        <div className="flex min-h-0 flex-1">
          <Sidebar />
          <Content />
        </div>
        <div className="absolute bottom-0 left-0 flex h-[21px] items-center rounded-tr border-t border-r border-[#9fbdb2] bg-[#bddcd1] px-[5px] font-['Roboto','Liberation_Sans',sans-serif] text-[12px] text-[#3c4f49]">
          https://hotel.staging.eventhotelstay.com/app/bookings/20
        </div>
        <ShareBanner />
      </div>
      <Dock />
      {/* mouse pointer */}
      <svg viewBox="0 0 20 34" className="pointer-events-none absolute top-[450px] left-[1552px] h-[34px] w-5 drop-shadow">
        <path d="M1.500 2v22.500l5-4.500 4.500 10 4.500-2-4.500-9.500H18z" fill="#000" stroke="#fff" strokeWidth="1.500" />
      </svg>
    </div>
  )
}
